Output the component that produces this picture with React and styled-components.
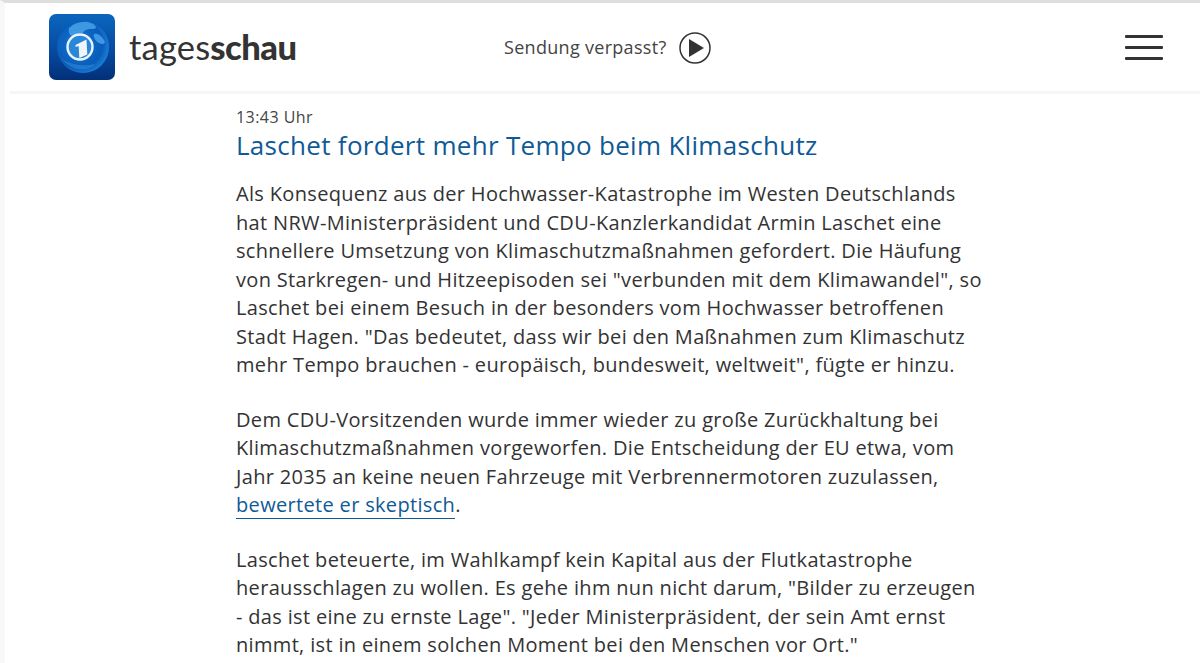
import React from "react";
import styled, { createGlobalStyle } from "styled-components";

const Global = createGlobalStyle`
  html, body { margin: 0; padding: 0; background: #fff; height: 100%; overflow: hidden; }
  body { font-family: "Open Sans", "Noto Sans", sans-serif; color: #333; }
`;
const Page = styled.div`
  height: 663px; overflow: hidden; background: #fff;
  border-top: 3px solid #dedede; border-left: 5px solid #f8f8f8; box-sizing: border-box;
`;
const Header = styled.header`
  height: 88px; margin-left: 5px; display: flex; align-items: center;
  border-bottom: 3px solid #f6f6f6; box-sizing: content-box;
  padding: 0 37px 0 39px;
`;
const Brand = styled.div`display: flex; align-items: center; gap: 14px; width: 455px;`;
const Wordmark = styled.div`
  font-family: Lato, "Open Sans", sans-serif; font-size: 34.5px; color: #333; line-height: 40px;
  letter-spacing: .2px; margin-top: -1px;
  b { font-weight: 900; letter-spacing: -.5px; }
`;
const Missed = styled.div`display: flex; align-items: center; gap: 13px; font-size: 18px; letter-spacing: .3px; color: #444; flex: 1; span { margin-top: -1px; } svg { margin-top: 1px; }`;
const Burger = styled.div`display: flex; flex-direction: column; gap: 8px; width: 38px; span { height: 3px; background: #333; border-radius: 1px; }`;
const Article = styled.main`width: 760px; margin-left: 231px; padding-top: 12px;`;
const Time = styled.div`font-size: 16px; line-height: 22px; letter-spacing: .45px; color: #444;`;
const Title = styled.h1`margin: -1px 0 17.25px; font-size: 26px; font-weight: 400; line-height: 36px; letter-spacing: .3px; color: #0f5a96;`;
const Para = styled.p`margin: 0 0 26px; font-size: 20px; line-height: 28.5px; letter-spacing: .33px; color: #333; white-space: nowrap;`;
const Link = styled.a`color: #0f5a96; border-bottom: 1px solid #0f5a96;`;

const Logo = () => (
  <svg width="66" height="66" viewBox="0 0 66 66">
    <defs>
      <linearGradient id="bg" x1="0" y1="0" x2="0" y2="1"><stop offset="0" stopColor="#0b66bd"/><stop offset=".6" stopColor="#06489e"/><stop offset="1" stopColor="#032f78"/></linearGradient>
      <radialGradient id="globe" cx=".42" cy=".45" r=".6"><stop offset="0" stopColor="#157ad6"/><stop offset=".75" stopColor="#0a5cba"/><stop offset="1" stopColor="#1c82d8"/></radialGradient>
      <clipPath id="gc"><circle cx="34" cy="33" r="26"/></clipPath>
    </defs>
    <rect width="66" height="66" rx="7" fill="url(#bg)"/>
    <circle cx="34" cy="33" r="26" fill="url(#globe)"/>
    <g clipPath="url(#gc)" fill="#4ea6ea" opacity=".8">
      <path d="M20 14c5-5 12-7 19-6 4 1 8 3 8 6-3 2-7 0-10 2-3 1-2 4-6 3-4 0-4 4-8 3-2 0-4-4-3-8z"/>
      <path d="M45 20c4-1 8 2 11 8-1 3-4 2-6 1-3-1-6-6-5-9z"/>
      <path d="M12 44c7 6 20 9 34 6-6 7-22 9-34-6z" opacity=".45"/>
    </g>
    <circle cx="31" cy="33" r="12.5" fill="#2a86d6" stroke="#eaf5fd" strokeWidth="2.4"/>
    <path d="M26.5 31l11-5.5.8 15-8 3.5-.6-12-3 1z" fill="#eef5fb"/>
  </svg>
);
const Play = () => (
  <svg width="32" height="32" viewBox="0 0 32 32"><circle cx="16" cy="16" r="15" fill="none" stroke="#333" strokeWidth="1.5"/><path d="M10 7l15 9-15 9z" fill="#333"/></svg>
);
const P1 = ["Als Konsequenz aus der Hochwasser-Katastrophe im Westen Deutschlands","hat NRW-Ministerpräsident und CDU-Kanzlerkandidat Armin Laschet eine","schnellere Umsetzung von Klimaschutzmaßnahmen gefordert. Die Häufung","von Starkregen- und Hitzeepisoden sei \"verbunden mit dem Klimawandel\", so","Laschet bei einem Besuch in der besonders vom Hochwasser betroffenen","Stadt Hagen. \"Das bedeutet, dass wir bei den Maßnahmen zum Klimaschutz","mehr Tempo brauchen - europäisch, bundesweit, weltweit\", fügte er hinzu."];
const P2 = ["Dem CDU-Vorsitzenden wurde immer wieder zu große Zurückhaltung bei","Klimaschutzmaßnahmen vorgeworfen. Die Entscheidung der EU etwa, vom","Jahr 2035 an keine neuen Fahrzeuge mit Verbrennermotoren zuzulassen,"];
const P3 = ["Laschet beteuerte, im Wahlkampf kein Kapital aus der Flutkatastrophe","herausschlagen zu wollen. Es gehe ihm nun nicht darum, \"Bilder zu erzeugen","- das ist eine zu ernste Lage\". \"Jeder Ministerpräsident, der sein Amt ernst","nimmt, ist in einem solchen Moment bei den Menschen vor Ort.\""];
const Lines = ({ l }) => l.map((t) => <React.Fragment key={t}>{t}<br/></React.Fragment>);
export default function App() {
  return (<>
    <Global/>
    <Page>
      <Header>
        <Brand><Logo/><Wordmark>tages<b>schau</b></Wordmark></Brand>
        <Missed><span>Sendung verpasst?</span><Play/></Missed>
        <Burger><span/><span/><span/></Burger>
      </Header>
      <Article>
        <Time>13:43 Uhr</Time>
        <Title>Laschet fordert mehr Tempo beim Klimaschutz</Title>
        <Para><Lines l={P1}/></Para>
        <Para><Lines l={P2}/><Link>bewertete er skeptisch</Link>.</Para>
        <Para><Lines l={P3}/></Para>
      </Article>
    </Page>
  </>);
}
